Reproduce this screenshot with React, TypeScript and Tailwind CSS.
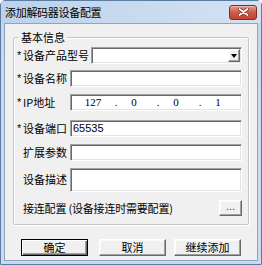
import React from "react";

const cjk = "font-['SimSun','Noto_Sans_CJK_SC',sans-serif]";

const sunken =
  "bg-white border border-t-[#a0a0a0] border-l-[#a0a0a0] border-r-white border-b-white shadow-[inset_1px_1px_#696969,inset_-1px_-1px_#e3e3e3]";

const raised =
  "bg-[#f0f0f0] border border-t-white border-l-white border-r-[#696969] border-b-[#696969] shadow-[inset_-1px_-1px_#a0a0a0,inset_1px_1px_#fafafa]";

function Label({ text, star, w }: { text: string; star?: boolean; w: string }) {
  return (
    <div className={`${w} shrink-0 flex items-center whitespace-nowrap`}>
      <span className="w-[6px] text-[11px] font-['Liberation_Sans',sans-serif]">{star ? "*" : ""}</span>
      <span>{text}</span>
    </div>
  );
}

function Btn({ label, primary }: { label: string; primary?: boolean }) {
  return (
    <button
      className={
        primary
          ? "w-[67px] h-[17px] bg-[#f0f0f0] border border-black shadow-[inset_1px_1px_#fff,inset_-1px_-1px_#696969,inset_-2px_-2px_#a0a0a0] flex items-center justify-center leading-none"
          : `w-[67px] h-[17px] ${raised} flex items-center justify-center leading-none`
      }
    >
      {label}
    </button>
  );
}

export default function App() {
  return (
    <div
      className={`w-[262px] h-[265px] flex flex-col border border-[#5d7ca3] rounded-t-[5px] bg-gradient-to-b from-[#c2d7ee] via-[#cadcf0] to-[#c7daee] text-[11px] text-black ${cjk}`}
    >
      {/* title bar */}
      <div className="h-[22px] flex items-center justify-between pl-[4px] pr-[4px] bg-gradient-to-r from-[#bcd2ea] to-[#d3e2f3]">
        <span className="leading-none tracking-[-0.3px]">添加解码器设备配置</span>
        <div className="w-[28px] h-[15px] rounded-[3px] border border-[#7d2e22] bg-gradient-to-b from-[#e39a8c] via-[#cf5a45] to-[#c0442f] flex items-center justify-center shadow-[inset_0_1px_#f0b9ae]">
          <svg width="11" height="8" viewBox="0 0 11 8">
            <path d="M1.5 1 L9.5 7 M9.5 1 L1.5 7" stroke="#6b2418" strokeWidth="3.2" strokeLinecap="round" />
            <path d="M1.5 1 L9.5 7 M9.5 1 L1.5 7" stroke="#ffffff" strokeWidth="1.8" strokeLinecap="round" />
          </svg>
        </div>
      </div>

      {/* client area */}
      <div className="flex-1 mx-[3px] mb-[3px] bg-[#f0f0f0] border border-[#8ea5c0] flex flex-col">
        <fieldset className="mt-[6px] mx-[8px] pl-[3px] pr-[6px] pb-[8px] border border-[#c5c5c5] rounded-[2px] shadow-[inset_1px_1px_#fff,1px_1px_#fff]">
          <legend className="ml-[2px] px-[2px] leading-[14px]">基本信息</legend>

          {/* 设备产品型号 */}
          <div className="mt-[3px] flex items-center h-[17px]">
            <Label text="设备产品型号" star w="w-[74px]" />
            <div className={`flex-1 h-[17px] ${sunken} flex justify-end items-center pr-[1px]`}>
              <div className={`w-[12px] h-[13px] ${raised} flex items-center justify-center`}>
                <svg width="6" height="4" viewBox="0 0 6 4">
                  <path d="M0 0 H6 L3 4 Z" fill="#000" />
                </svg>
              </div>
            </div>
          </div>

          {/* 设备名称 */}
          <div className="mt-[6px] flex items-center h-[17px]">
            <Label text="设备名称" star w="w-[53px]" />
            <div className={`flex-1 h-[17px] ${sunken}`} />
          </div>

          {/* IP地址 */}
          <div className="mt-[7px] flex items-center h-[17px]">
            <Label text="IP地址" star w="w-[53px]" />
            <div className={`flex-1 h-[17px] ${sunken} flex items-center font-['Liberation_Serif',serif] text-[11px] leading-none pl-[1px]`}>
              <span className="w-[42px] text-center">127</span>
              <span className="w-[4px] text-center">.</span>
              <span className="w-[38px] pr-[6px] text-center">0</span>
              <span className="w-[4px] text-center">.</span>
              <span className="w-[38px] pr-[6px] text-center">0</span>
              <span className="w-[4px] text-center">.</span>
              <span className="w-[38px] pr-[6px] text-center">1</span>
            </div>
          </div>

          {/* 设备端口 */}
          <div className="mt-[9px] flex items-center h-[17px]">
            <Label text="设备端口" star w="w-[53px]" />
            <div className={`flex-1 h-[17px] ${sunken} flex items-center pl-[2px] font-['Liberation_Sans',sans-serif] text-[11px] leading-none`}>
              65535
            </div>
          </div>

          {/* 扩展参数 */}
          <div className="mt-[7px] flex items-center h-[17px]">
            <Label text="扩展参数" w="w-[53px]" />
            <div className={`flex-1 h-[17px] ${sunken}`} />
          </div>

          {/* 设备描述 */}
          <div className="mt-[7px] flex items-start h-[24px]">
            <div className="pt-[3px]">
              <Label text="设备描述" w="w-[53px]" />
            </div>
            <div className={`flex-1 h-[24px] ${sunken}`} />
          </div>

          {/* 接连配置 */}
          <div className="mt-[8px] flex items-center justify-between h-[16px]">
            <span className="pl-[6px] whitespace-nowrap tracking-[-0.2px]">接连配置 (设备接连时需要配置)</span>
            <button className={`w-[23px] h-[16px] ${raised} flex items-center justify-center text-[#404040] font-['Liberation_Sans',sans-serif] leading-none pb-[3px]`}>
              ...
            </button>
          </div>
        </fieldset>

        <div className="mt-[14px] ml-[16px] flex items-center">
          <Btn label="确定" primary />
          <div className="w-[11px]" />
          <Btn label="取消" />
          <div className="w-[8px]" />
          <Btn label="继续添加" />
        </div>
      </div>
    </div>
  );
}
